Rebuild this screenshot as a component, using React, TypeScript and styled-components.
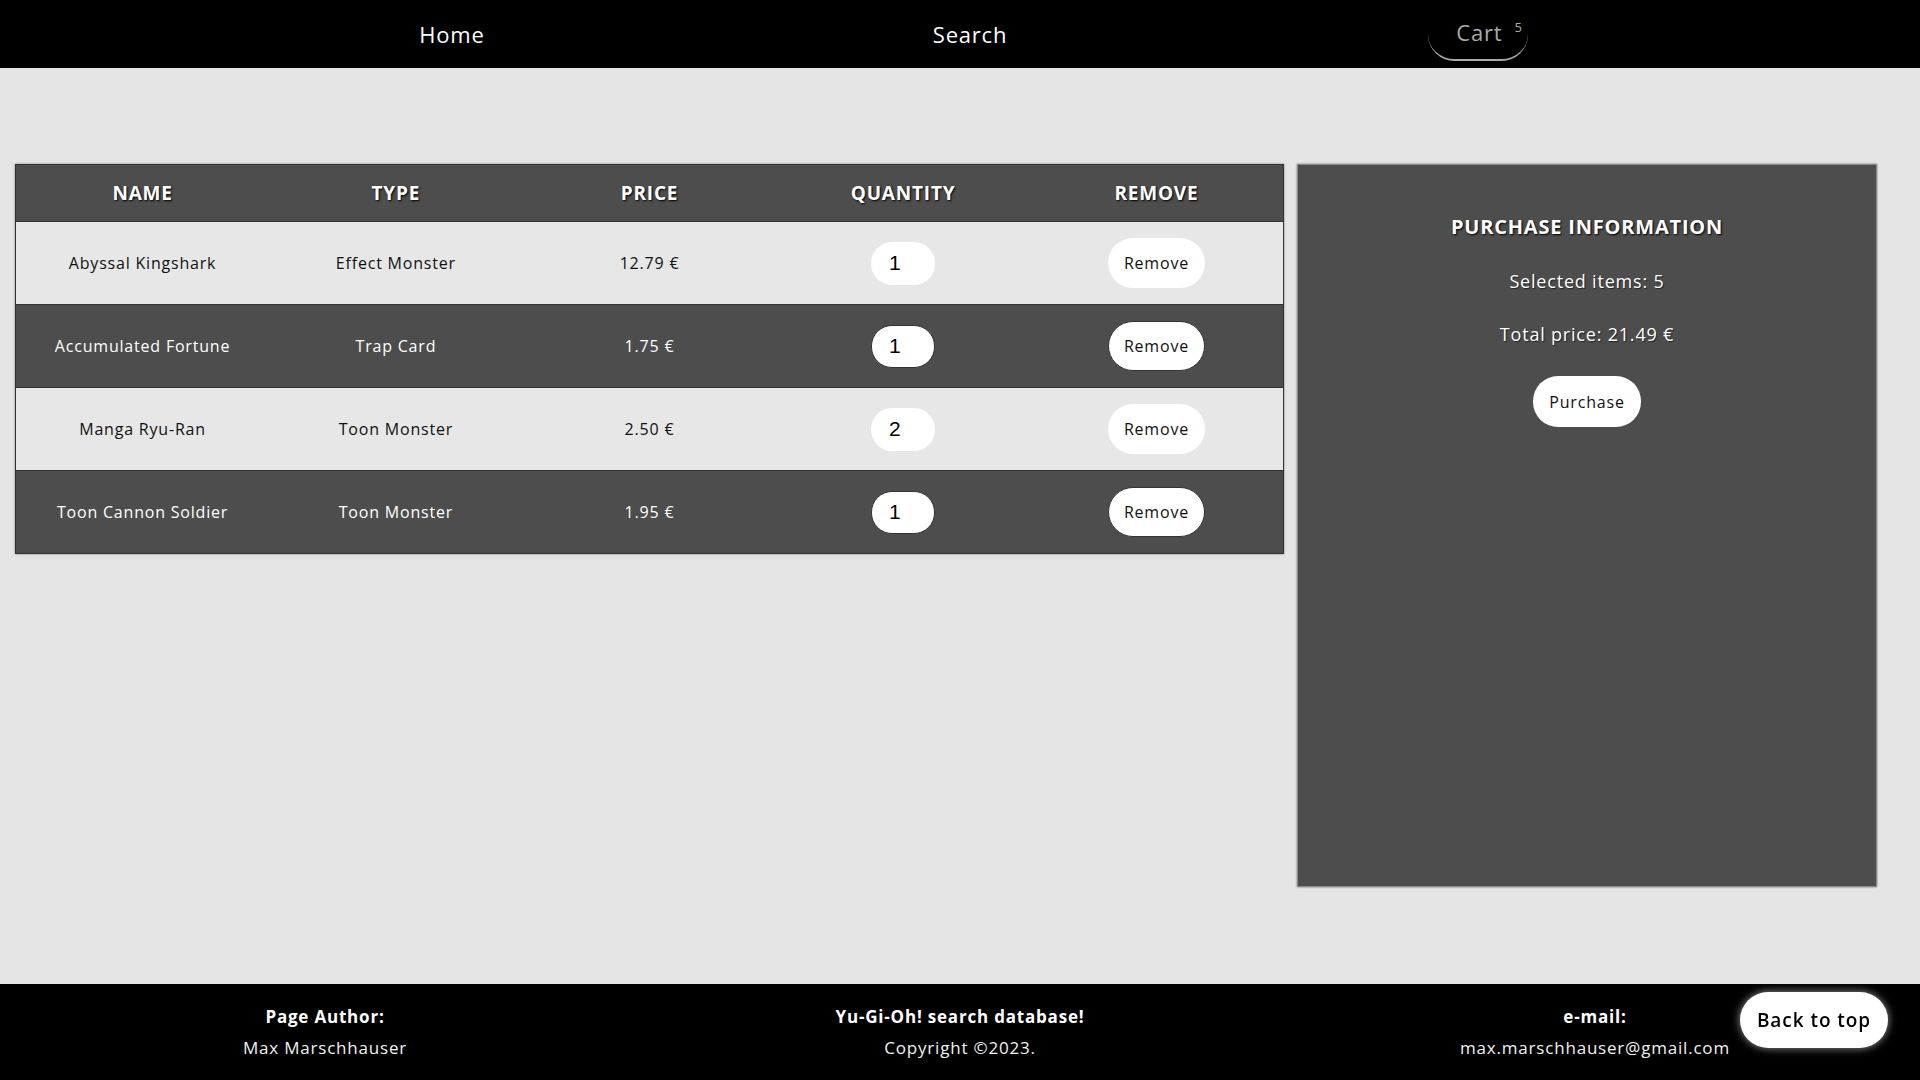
import React from 'react';
import styled, { createGlobalStyle } from 'styled-components';

const FONT = `"Open Sans", "DejaVu Sans", sans-serif`;

const GlobalStyle = createGlobalStyle`
  html, body {
    margin: 0;
    padding: 0;
  }
  body {
    font-family: ${FONT};
    letter-spacing: 0.05em;
    background: #e5e5e5;
  }
  * {
    box-sizing: border-box;
  }
`;

const Page = styled.div`
  min-height: 100vh;
  display: flex;
  flex-direction: column;
`;

const Nav = styled.nav`
  height: 68px;
  background: #000;
  display: flex;
  align-items: center;
`;

const NavList = styled.ul`
  margin: 0;
  padding: 0 0 0 193px;
  list-style: none;
  display: grid;
  grid-template-columns: 518px 518px 498px;
  justify-items: center;
  align-items: center;
`;

const NavLink = styled.a<{ $active?: boolean }>`
  display: block;
  font-size: 22px;
  line-height: 27px;
  color: ${(p) => (p.$active ? '#aaaaaa' : '#ffffff')};
  text-decoration: none;
  padding: ${(p) => (p.$active ? '11px 5px 9px 28px' : '0')};
  border-bottom: ${(p) => (p.$active ? '2px solid #aaaaaa' : 'none')};
  border-radius: 30px;
`;

const Badge = styled.span`
  position: relative;
  top: -9px;
  margin-left: 12px;
  font-size: 13px;
`;

const Main = styled.main`
  flex: 1;
  display: flex;
  align-items: flex-start;
  gap: 13px;
  padding: 96px 43px 97px 15px;
`;

const Table = styled.table`
  width: 1269px;
  border-collapse: collapse;
  border: 1px solid #333;
  box-shadow: 0 0 2px rgba(0, 0, 0, 0.45);
`;

const HeadCell = styled.th`
  height: 57px;
  background: #4d4d4d;
  color: #fff;
  font-size: 19px;
  font-weight: 700;
  text-transform: uppercase;
  text-shadow: 1px 1px 2px #000;
  width: 20%;
  border-bottom: 1px solid #333;
`;

const Row = styled.tr<{ $dark: boolean }>`
  height: 83px;
  background: ${(p) => (p.$dark ? '#4d4d4d' : '#e7e7e7')};
  color: ${(p) => (p.$dark ? '#fff' : '#111')};
  border-bottom: 1px solid #333;
`;

const Cell = styled.td`
  text-align: center;
  vertical-align: middle;
  font-size: 16px;
`;

const QtyInput = styled.input<{ $dark: boolean }>`
  width: 64px;
  height: 43px;
  border-radius: 21px;
  border: 1px solid ${(p) => (p.$dark ? '#333' : 'transparent')};
  background: #fff;
  padding: 0 0 0 17px;
  font-family: "Liberation Sans", Arial, sans-serif;
  font-size: 21px;
  color: #000;
  outline: none;
  -moz-appearance: textfield;
  &::-webkit-inner-spin-button,
  &::-webkit-outer-spin-button {
    -webkit-appearance: none;
    margin: 0;
  }
`;

const PillButton = styled.button<{ $dark?: boolean }>`
  height: 50px;
  padding: 0 15px;
  border-radius: 25px;
  border: 1px solid ${(p) => (p.$dark ? '#333' : 'transparent')};
  background: #fff;
  color: #111;
  font-family: ${FONT};
  font-size: 16px;
  letter-spacing: 0.05em;
  cursor: pointer;
`;

const Panel = styled.aside`
  width: 580px;
  align-self: stretch;
  background: #4d4d4d;
  box-shadow: 0 0 2px rgba(0, 0, 0, 0.55);
  border: 1px solid #8a8a8a;
  display: flex;
  flex-direction: column;
  align-items: center;
  padding-top: 50px;
  color: #fff;
`;

const PanelTitle = styled.h2`
  margin: 0;
  font-size: 20px;
  line-height: 24px;
  font-weight: 700;
  text-shadow: 1px 1px 2px #000;
`;

const PanelText = styled.p`
  margin: 31px 0 0;
  font-size: 18px;
  line-height: 22px;
  text-shadow: 1px 1px 1px #222;
`;

const PurchaseButton = styled(PillButton)`
  margin-top: 31px;
  height: 51px;
`;

const Footer = styled.footer`
  height: 96px;
  background: #000;
  color: #fff;
  display: grid;
  grid-template-columns: repeat(3, 635px);
  justify-content: center;
  padding-top: 22px;
`;

const FooterColumn = styled.div`
  display: flex;
  flex-direction: column;
  align-items: center;
  gap: 9px;
  font-size: 17px;
  line-height: 22px;
`;

const FooterTitle = styled.strong`
  font-weight: 700;
`;

const FooterText = styled.span`
  font-weight: 400;
  color: #f2f2f2;
`;

const BackToTop = styled.button`
  position: fixed;
  right: 32px;
  bottom: 32px;
  width: 148px;
  height: 56px;
  border: none;
  border-radius: 28px;
  background: #fff;
  color: #000;
  font-family: ${FONT};
  font-size: 19px;
  font-weight: 600;
  letter-spacing: 0.05em;
  box-shadow: 0 0 8px rgba(255, 255, 255, 0.6);
  cursor: pointer;
`;

type Item = { name: string; type: string; price: string; qty: number };

const items: Item[] = [
  { name: 'Abyssal Kingshark', type: 'Effect Monster', price: '12.79 €', qty: 1 },
  { name: 'Accumulated Fortune', type: 'Trap Card', price: '1.75 €', qty: 1 },
  { name: 'Manga Ryu-Ran', type: 'Toon Monster', price: '2.50 €', qty: 2 },
  { name: 'Toon Cannon Soldier', type: 'Toon Monster', price: '1.95 €', qty: 1 },
];

export default function App() {
  return (
    <Page>
      <GlobalStyle />
      <Nav>
        <NavList>
          <li><NavLink href="#">Home</NavLink></li>
          <li><NavLink href="#">Search</NavLink></li>
          <li>
            <NavLink href="#" $active>
              Cart<Badge>5</Badge>
            </NavLink>
          </li>
        </NavList>
      </Nav>

      <Main>
        <Table>
          <thead>
            <tr>
              <HeadCell>Name</HeadCell>
              <HeadCell>Type</HeadCell>
              <HeadCell>Price</HeadCell>
              <HeadCell>Quantity</HeadCell>
              <HeadCell>Remove</HeadCell>
            </tr>
          </thead>
          <tbody>
            {items.map((item, i) => {
              const dark = i % 2 === 1;
              return (
                <Row key={item.name} $dark={dark}>
                  <Cell>{item.name}</Cell>
                  <Cell>{item.type}</Cell>
                  <Cell>{item.price}</Cell>
                  <Cell>
                    <QtyInput type="number" defaultValue={item.qty} min={1} $dark={dark} />
                  </Cell>
                  <Cell>
                    <PillButton $dark={dark}>Remove</PillButton>
                  </Cell>
                </Row>
              );
            })}
          </tbody>
        </Table>

        <Panel>
          <PanelTitle>PURCHASE INFORMATION</PanelTitle>
          <PanelText>Selected items: 5</PanelText>
          <PanelText>Total price: 21.49 €</PanelText>
          <PurchaseButton>Purchase</PurchaseButton>
        </Panel>
      </Main>

      <Footer>
        <FooterColumn>
          <FooterTitle>Page Author:</FooterTitle>
          <FooterText>Max Marschhauser</FooterText>
        </FooterColumn>
        <FooterColumn>
          <FooterTitle>Yu-Gi-Oh! search database!</FooterTitle>
          <FooterText>Copyright ©2023.</FooterText>
        </FooterColumn>
        <FooterColumn>
          <FooterTitle>e-mail:</FooterTitle>
          <FooterText>max.marschhauser@gmail.com</FooterText>
        </FooterColumn>
      </Footer>

      <BackToTop>Back to top</BackToTop>
    </Page>
  );
}
